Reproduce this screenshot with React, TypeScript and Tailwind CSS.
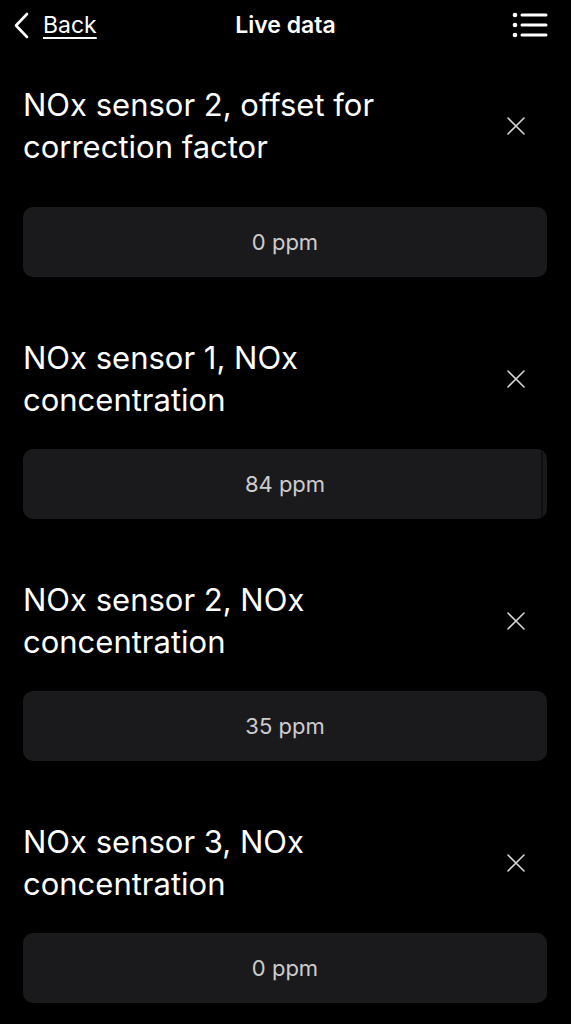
import React from "react";

const items = [
  { title: "NOx sensor 2, offset for correction factor", value: "0 ppm", first: true },
  { title: "NOx sensor 1, NOx concentration", value: "84 ppm", scroll: true },
  { title: "NOx sensor 2, NOx concentration", value: "35 ppm" },
  { title: "NOx sensor 3, NOx concentration", value: "0 ppm" },
];

function XIcon() {
  return (
    <svg width="18" height="18" viewBox="0 0 18 18" fill="none">
      <path d="M1 1 L17 17 M17 1 L1 17" stroke="#d6d6d6" strokeWidth="1.6" strokeLinecap="round" />
    </svg>
  );
}

export default function App() {
  return (
    <div
      className="w-[571px] h-[1024px] overflow-hidden bg-black text-white"
      style={{ fontFamily: "Inter, 'Noto Sans', sans-serif" }}
    >
      <header className="relative flex h-[50px] items-center justify-between">
        <div className="flex items-center pl-[13px]">
          <svg width="17" height="27" viewBox="0 0 17 27" fill="none">
            <path d="M14 2 L3 13.5 L14 25" stroke="white" strokeWidth="2.6" strokeLinecap="round" strokeLinejoin="round" />
          </svg>
          <span className="ml-[13px] text-[23px] leading-none underline underline-offset-[4px] decoration-[1.5px]">Back</span>
        </div>
        <div className="absolute left-0 right-0 top-0 flex h-[50px] items-center justify-center pointer-events-none">
          <span className="text-[23px] font-semibold">Live data</span>
        </div>
        <div className="pr-[23px]">
          <svg width="36" height="26" viewBox="0 0 36 26" fill="none">
            <circle cx="3" cy="3" r="2.3" fill="white" />
            <circle cx="3" cy="13" r="2.3" fill="white" />
            <circle cx="3" cy="23" r="2.3" fill="white" />
            <path d="M10 3 H34 M10 13 H34 M10 23 H34" stroke="white" strokeWidth="3" strokeLinecap="round" />
          </svg>
        </div>
      </header>

      <div className="flex flex-col gap-[60px] px-[23px] pt-[34px] pr-[24px]">
        {items.map((it, i) => (
          <div key={i} className="flex flex-col">
            <div className={`flex items-center justify-between ${it.first ? "mb-[39px]" : "mb-[28px]"}`}>
              <div className="w-[450px] text-[31px] leading-[42px]">{it.title}</div>
              <div className="mr-[22px] flex">
                <XIcon />
              </div>
            </div>
            <div className="relative flex h-[70px] items-center justify-center rounded-[10px] bg-[#1a1a1c]">
              <span className="text-[22px] text-[#cdcdcf]">{it.value}</span>
              {it.scroll && (
                <div className="absolute right-[4px] top-[3px] bottom-[2px] w-[2px] bg-[#0e0e0f]" />
              )}
            </div>
          </div>
        ))}
      </div>
    </div>
  );
}
